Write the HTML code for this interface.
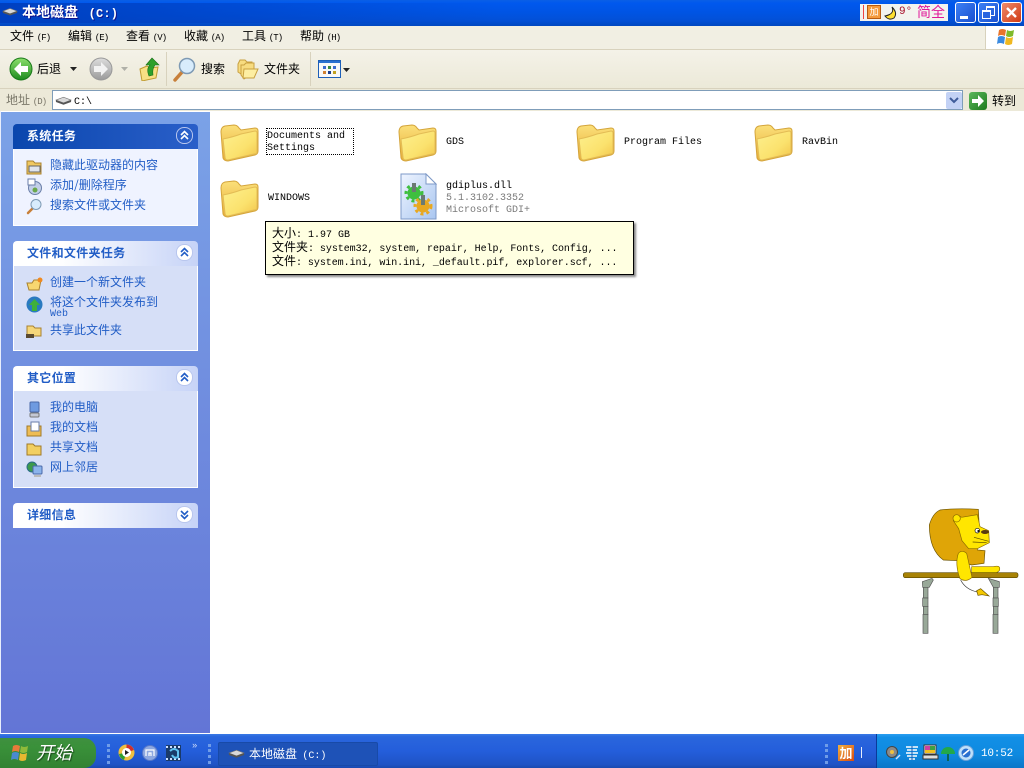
<!DOCTYPE html>
<html lang="zh"><head><meta charset="utf-8"><title>本地磁盘 (C:)</title>
<style>
html,body{margin:0;padding:0;width:1024px;height:768px;overflow:hidden;background:#fff}
body{position:relative;font:12px/14px "WenQuanYi Zen Hei","Noto Sans CJK SC",sans-serif;color:#000}
.a,.t,svg.i{position:absolute}
.t{white-space:pre;line-height:14px}
.m{font-family:"Liberation Mono",monospace;font-size:10px}
.k{font-family:"Liberation Mono",monospace;font-size:9px;letter-spacing:-.9px}
.hd{position:absolute;left:13px;width:185px;height:25px;border-radius:4px 4px 0 0;background:linear-gradient(90deg,#fff 0,#fff 25%,#c6d3f7 100%)}
.hd b{position:absolute;left:14px;top:5px;font-size:12px;line-height:14px;color:#215dc6;letter-spacing:.3px}
.bd{position:absolute;left:13px;width:183px;border:1px solid #fff;border-top:0;background:#d6dff7}
.lk{position:absolute;left:50px;color:#215dc6;white-space:pre;line-height:14px}
.cb{position:absolute;left:176px;width:15px;height:15px;border-radius:8px;background:#fff;border:1px solid #b8c6ee;color:#215dc6}
</style></head><body>
<svg width="0" height="0" style="position:absolute"><defs>
<linearGradient id="fg" x1="0" y1="0" x2="1" y2="1"><stop offset="0" stop-color="#fdf08e"/><stop offset=".6" stop-color="#fbe26e"/><stop offset="1" stop-color="#f2c44a"/></linearGradient>
<linearGradient id="fb" x1="0" y1="0" x2="0" y2="1"><stop offset="0" stop-color="#fbe07a"/><stop offset="1" stop-color="#e8ac36"/></linearGradient>
<linearGradient id="pg" x1="0" y1="0" x2="1" y2="1"><stop offset="0" stop-color="#eef4ff"/><stop offset="1" stop-color="#a9c6f0"/></linearGradient>
<linearGradient id="gb" x1="0" y1="0" x2="0" y2="1"><stop offset="0" stop-color="#8ce06c"/><stop offset="1" stop-color="#1d8a1e"/></linearGradient>
<linearGradient id="gr" x1="0" y1="0" x2="0" y2="1"><stop offset="0" stop-color="#dcdcdc"/><stop offset="1" stop-color="#9a9a9a"/></linearGradient>
<symbol id="folder" viewBox="0 0 40 38"><path d="M2 8Q2 3 6 2L15 1Q18 1 20 4L22 6L36 4Q39 4 39 7V27Q39 30 36 31L9 37Q5 37 4 34Z" fill="url(#fb)" stroke="#d4a53c"/><path d="M4 15Q14 13 22 10L36 7Q38 7 38 9V28Q38 30 35 30L9 36Q6 36 6 33Z" fill="url(#fg)" stroke="#e3bc55"/></symbol>
<symbol id="hdd" viewBox="0 0 18 10"><path d="M1 4L9 1L17 4L9 7Z" fill="#d9d9d9" stroke="#777" stroke-width=".6"/><path d="M1 4V6L9 9L17 6V4L9 7Z" fill="#555"/></symbol>
</defs></svg>

<!-- title bar -->
<div class="a" style="left:0;top:0;width:1024px;height:26px;background:linear-gradient(180deg,#0a5fe6 0,#0058ee 12%,#0054e3 50%,#0350d6 80%,#0248c0 100%)"></div>
<div class="a" style="left:0;top:3px;width:500px;height:20px;background:linear-gradient(90deg,#0040c0,rgba(0,64,192,0))"></div>
<svg class="i" style="left:2px;top:7px" width="16" height="10"><use href="#hdd"/></svg>
<div class="t" style="left:22px;top:5px;color:#fff;font-weight:bold;font-size:14px;text-shadow:1px 1px 0 #0f1089">本地磁盘 <span class="m" style="font-size:12px;font-weight:bold;letter-spacing:.2px"> (C:)</span></div>
<div class="a" style="left:860px;top:4px;width:88px;height:17px;background:#f3f3ee"></div>
<div class="a" style="left:863px;top:5px;width:1px;height:14px;background:#e44"></div>
<div class="a" style="left:867px;top:5px;width:14px;height:14px;background:#f49a3c;border:1px solid #b85a10;box-sizing:border-box;color:#fff;font-size:9px;line-height:12px;text-align:center">加</div>
<svg class="i" style="left:883px;top:6px" width="15" height="14"><path d="M9 1Q12 8 2 10Q6 15 11 12Q15 7 9 1Z" fill="#ffe030" stroke="#222" stroke-width="1"/></svg>
<div class="t" style="left:899px;top:5px;color:#a8102c;font-size:11px;font-family:'Liberation Mono',monospace">9°</div>
<div class="t" style="left:917px;top:4px;color:#e0189a;font-size:14px;line-height:17px">简全</div>
<div class="a" style="left:955px;top:2px;width:21px;height:21px;box-sizing:border-box;border:1px solid #fff;border-radius:3px;background:linear-gradient(135deg,#3c80f4,#1a50d0)"><div class="a" style="left:4px;top:13px;width:8px;height:3px;background:#fff"></div></div>
<div class="a" style="left:978px;top:2px;width:21px;height:21px;box-sizing:border-box;border:1px solid #fff;border-radius:3px;background:linear-gradient(135deg,#3c80f4,#1a50d0)"><div class="a" style="left:7px;top:3px;width:7px;height:7px;border:1px solid #fff;border-top-width:2px"></div><div class="a" style="left:3px;top:7px;width:7px;height:6px;border:1px solid #fff;border-top-width:2px;background:#2a66e0"></div></div>
<div class="a" style="left:1001px;top:2px;width:21px;height:21px;box-sizing:border-box;border:1px solid #fff;border-radius:3px;background:linear-gradient(135deg,#ee8a6a,#d03a14)"><svg class="i" style="left:3px;top:3px" width="13" height="13"><path d="M2 2L11 11M11 2L2 11" stroke="#fff" stroke-width="2.4"/></svg></div>

<!-- menu bar -->
<div class="a" style="left:0;top:26px;width:1024px;height:23px;background:#f1efe3;border-bottom:1px solid #d8d2bd"></div>
<div class="t" style="left:10px;top:29px">文件 <span class="k">(F)</span></div>
<div class="t" style="left:68px;top:29px">编辑 <span class="k">(E)</span></div>
<div class="t" style="left:126px;top:29px">查看 <span class="k">(V)</span></div>
<div class="t" style="left:184px;top:29px">收藏 <span class="k">(A)</span></div>
<div class="t" style="left:242px;top:29px">工具 <span class="k">(T)</span></div>
<div class="t" style="left:300px;top:29px">帮助 <span class="k">(H)</span></div>
<div class="a" style="left:985px;top:26px;width:39px;height:23px;background:#fff;border-left:1px solid #d8d2bd"></div>
<svg class="i" style="left:996px;top:27px" width="20" height="20"><path d="M3 3Q6 1 10 3L9 9Q5 7 2 9Z" fill="#e8742a"/><path d="M11 3Q14 5 18 3L17 9Q13 11 10 9Z" fill="#7fba2a"/><path d="M2 10Q5 8 9 10L8 17Q4 15 1 17Z" fill="#3a8ae0"/><path d="M10 10Q13 12 17 10L16 17Q12 19 9 17Z" fill="#f0b820"/></svg>

<!-- toolbar -->
<div class="a" style="left:0;top:50px;width:1024px;height:38px;background:linear-gradient(180deg,#f4f2e8,#ece9d8);border-bottom:1px solid #d8d2bd"></div>
<svg class="i" style="left:9px;top:57px" width="24" height="24"><circle cx="12" cy="12" r="11" fill="url(#gb)" stroke="#1a7a1a"/><path d="M12 5L5 12L12 19V15H19V9H12Z" fill="#fff"/></svg>
<div class="t" style="left:37px;top:62px">后退</div>
<svg class="i" style="left:70px;top:67px" width="7" height="5"><path d="M0 0H7L3.500 4Z" fill="#222"/></svg>
<svg class="i" style="left:89px;top:57px" width="24" height="24"><circle cx="12" cy="12" r="11" fill="url(#gr)" stroke="#999"/><path d="M12 5L19 12L12 19V15H5V9H12Z" fill="#f2f2f2"/></svg>
<svg class="i" style="left:121px;top:67px" width="7" height="4"><path d="M0 0H7L3.500 4Z" fill="#b0b0a8"/></svg>
<svg class="i" style="left:139px;top:57px" width="21" height="24"><path d="M1 12L8 9L11 11L19 10L17 21L3 24Z" fill="#f8e084" stroke="#c09c34"/><path d="M10 19Q7 12 11 8H7L13 1L20 8H16Q13 12 14 18Z" fill="#2da02a" stroke="#1a6e1a" stroke-width=".6"/></svg>
<div class="a" style="left:166px;top:52px;width:1px;height:34px;background:#d8d2bd"></div>
<svg class="i" style="left:172px;top:57px" width="25" height="25"><path d="M3 23L11 14" stroke="#c8803a" stroke-width="3.500" stroke-linecap="round"/><circle cx="15" cy="9" r="7.500" fill="#d8ecfc" stroke="#7e9ab4" stroke-width="1.500"/></svg>
<div class="t" style="left:201px;top:62px">搜索</div>
<svg class="i" style="left:237px;top:59px" width="22" height="21"><path d="M1 5L3 1H8L10 3H15V8H6L4 15L1 13Z" fill="#f7dc80" stroke="#c8a040"/><path d="M4 6H7L9 4H17V14L7 20L4 16Z" fill="#f7dc80" stroke="#c8a040"/><path d="M7 10H21L17 19H6Z" fill="#fdeea2" stroke="#c8a040"/></svg>
<div class="t" style="left:264px;top:62px">文件夹</div>
<div class="a" style="left:310px;top:52px;width:1px;height:34px;background:#d8d2bd"></div>
<svg class="i" style="left:318px;top:60px" width="24" height="19"><rect x=".5" y=".5" width="22" height="17" fill="#f8f8f8" stroke="#1d5fb8"/><rect x="1" y="1" width="21" height="2" fill="#2a70d0"/><g><rect x="5" y="6" width="3" height="3" fill="#3a6ad0"/><rect x="10" y="6" width="3" height="3" fill="#3a8a3a"/><rect x="15" y="6" width="3" height="3" fill="#3a6ad0"/><rect x="5" y="11" width="3" height="3" fill="#d08030"/><rect x="10" y="11" width="3" height="3" fill="#1d3f90"/><rect x="15" y="11" width="3" height="3" fill="#c0a020"/></g></svg>
<svg class="i" style="left:343px;top:68px" width="7" height="4"><path d="M0 0H7L3.500 4Z" fill="#222"/></svg>

<!-- address bar -->
<div class="a" style="left:0;top:89px;width:1024px;height:22px;background:#ece9d8"></div>
<div class="t" style="left:6px;top:93px;color:#7b786a">地址 <span class="k">(D)</span></div>
<div class="a" style="left:52px;top:90px;width:911px;height:20px;box-sizing:border-box;background:#fff;border:1px solid #7f9db9"></div>
<svg class="i" style="left:55px;top:96px" width="17" height="10"><use href="#hdd"/></svg>
<div class="t m" style="left:74px;top:96px">C:\</div>
<div class="a" style="left:946px;top:92px;width:16px;height:17px;border-radius:2px;background:#c3d2f5"><svg class="i" style="left:3px;top:5px" width="10" height="7"><path d="M1 1L5 5L9 1" fill="none" stroke="#3f5c9a" stroke-width="2"/></svg></div>
<div class="a" style="left:969px;top:92px;width:18px;height:18px;border-radius:3px;background:linear-gradient(135deg,#5cb85c,#1d7a1d)"><svg class="i" style="left:2px;top:2px" width="14" height="14"><path d="M7 1L13 7L7 13V9H1V5H7Z" fill="#fff"/></svg></div>
<div class="t" style="left:992px;top:94px">转到</div>

<!-- sidebar -->
<div class="a" style="left:0;top:111px;width:1px;height:624px;background:#e8eefc"></div>
<div class="a" style="left:1px;top:112px;width:209px;height:621px;background:linear-gradient(180deg,#7ba2e7,#6375d6)"></div>

<div class="hd" style="top:124px;background:linear-gradient(90deg,#0a46ad,#2a5fc9)"><b style="color:#fff">系统任务</b></div>
<div class="cb" style="top:127px;background:#2a5fc9;border-color:#b8c6ee"><svg class="i" style="left:3px;top:2px" width="9" height="11"><path d="M1 5L4.500 1.500L8 5M1 9L4.500 5.500L8 9" fill="none" stroke="#fff" stroke-width="1.600"/></svg></div>
<div class="bd" style="top:149px;height:76px;background:#eff3ff"></div>
<svg class="i" style="left:26px;top:159px" width="17" height="16"><path d="M1 2H7L9 4H15V15H1Z" fill="#f0c860" stroke="#a88230"/><rect x="3" y="7" width="11" height="6" fill="#dfe4ec" stroke="#666"/></svg>
<div class="lk" style="top:158px">隐藏此驱动器的内容</div>
<svg class="i" style="left:26px;top:178px" width="17" height="17"><circle cx="9" cy="10" r="6.500" fill="#c2cfe8" stroke="#6a7ea8"/><rect x="2" y="1" width="7" height="6" fill="#fff" stroke="#6a7ea8"/><circle cx="9" cy="12" r="2.500" fill="#6aa84a"/></svg>
<div class="lk" style="top:178px">添加/删除程序</div>
<svg class="i" style="left:26px;top:198px" width="17" height="17"><path d="M2 15L7 10" stroke="#c8803a" stroke-width="2.500" stroke-linecap="round"/><circle cx="10" cy="6.500" r="5" fill="#d8ecfc" stroke="#7e9ab4"/></svg>
<div class="lk" style="top:198px">搜索文件或文件夹</div>

<div class="hd" style="top:241px"><b>文件和文件夹任务</b></div>
<div class="cb" style="top:244px"><svg class="i" style="left:3px;top:2px" width="9" height="11"><path d="M1 5L4.500 1.500L8 5M1 9L4.500 5.500L8 9" fill="none" stroke="#215dc6" stroke-width="1.600"/></svg></div>
<div class="bd" style="top:266px;height:84px"></div>
<svg class="i" style="left:26px;top:276px" width="17" height="16"><path d="M1 7H6L8 4H15L13 14H3Z" fill="#f8d770" stroke="#a88230"/><circle cx="14" cy="4" r="2.500" fill="#f08a20"/></svg>
<div class="lk" style="top:275px">创建一个新文件夹</div>
<svg class="i" style="left:26px;top:296px" width="17" height="17"><circle cx="8.500" cy="8.500" r="8" fill="#2a7ac0"/><path d="M8.500 3L14 9H11V15H6V9H3Z" fill="#3fb03a"/></svg>
<div class="lk" style="top:295px">将这个文件夹发布到</div>
<div class="lk m" style="top:308px">Web</div>
<svg class="i" style="left:26px;top:323px" width="17" height="16"><path d="M1 3H7L9 5H15V13H1Z" fill="#f6d77a" stroke="#a88230"/><rect x="0" y="11" width="8" height="4" fill="#5a4a30"/></svg>
<div class="lk" style="top:323px">共享此文件夹</div>

<div class="hd" style="top:366px"><b>其它位置</b></div>
<div class="cb" style="top:369px"><svg class="i" style="left:3px;top:2px" width="9" height="11"><path d="M1 5L4.500 1.500L8 5M1 9L4.500 5.500L8 9" fill="none" stroke="#215dc6" stroke-width="1.600"/></svg></div>
<div class="bd" style="top:391px;height:96px"></div>
<svg class="i" style="left:26px;top:401px" width="17" height="17"><rect x="4" y="1" width="9" height="10" rx="1" fill="#6e9ae0" stroke="#4a68a8"/><rect x="4" y="12" width="9" height="4" rx="1" fill="#c4c8d4" stroke="#777"/></svg>
<div class="lk" style="top:400px">我的电脑</div>
<svg class="i" style="left:26px;top:421px" width="17" height="16"><path d="M1 5H15V15H1Z" fill="#eebc55" stroke="#a07a28"/><rect x="5" y="1" width="8" height="9" fill="#fff" stroke="#6a7ea8"/></svg>
<div class="lk" style="top:420px">我的文档</div>
<svg class="i" style="left:26px;top:441px" width="17" height="16"><path d="M1 3H7L9 5H15V14H1Z" fill="#f2cf62" stroke="#a07a28"/></svg>
<div class="lk" style="top:440px">共享文档</div>
<svg class="i" style="left:26px;top:461px" width="17" height="17"><circle cx="6" cy="6" r="5" fill="#3d9a4c" stroke="#2a6a8a"/><rect x="7" y="5" width="9" height="8" rx="1" fill="#8cb4ec" stroke="#4a68a8"/><rect x="8" y="14" width="7" height="2" fill="#bbb"/></svg>
<div class="lk" style="top:460px">网上邻居</div>

<div class="hd" style="top:503px"><b>详细信息</b></div>
<div class="cb" style="top:506px"><svg class="i" style="left:3px;top:2px" width="9" height="11"><path d="M1 2L4.500 5.500L8 2M1 6L4.500 9.500L8 6" fill="none" stroke="#215dc6" stroke-width="1.600"/></svg></div>

<!-- content items -->
<svg class="i" style="left:219px;top:124px" width="40" height="38"><use href="#folder"/></svg>
<div class="a" style="left:266px;top:128px;width:86px;height:25px;border:1px dotted #000"></div>
<div class="t m" style="left:267px;top:131px;line-height:12px">Documents and
Settings</div>
<svg class="i" style="left:397px;top:124px" width="40" height="38"><use href="#folder"/></svg>
<div class="t m" style="left:446px;top:136px">GDS</div>
<svg class="i" style="left:575px;top:124px" width="40" height="38"><use href="#folder"/></svg>
<div class="t m" style="left:624px;top:136px">Program Files</div>
<svg class="i" style="left:753px;top:124px" width="40" height="38"><use href="#folder"/></svg>
<div class="t m" style="left:802px;top:136px">RavBin</div>
<svg class="i" style="left:219px;top:180px" width="40" height="38"><use href="#folder"/></svg>
<div class="t m" style="left:268px;top:192px">WINDOWS</div>
<svg class="i" style="left:399px;top:173px" width="38" height="48"><path d="M2 1H27L37 11V46H2Z" fill="url(#pg)" stroke="#7e9ac8"/><path d="M27 1V11H37Z" fill="#fff" stroke="#7e9ac8"/><circle cx="15" cy="20" r="6.500" fill="#3fbf3f"/><circle cx="15" cy="20" r="8" fill="none" stroke="#3fbf3f" stroke-width="3" stroke-dasharray="3 3"/><circle cx="24" cy="33" r="6.500" fill="#e8a820"/><circle cx="24" cy="33" r="8" fill="none" stroke="#e8a820" stroke-width="3" stroke-dasharray="3 3"/><rect x="13" y="10" width="4" height="9" fill="#6a7a72"/><rect x="22" y="22" width="4" height="10" fill="#6a7a72"/></svg>
<div class="t m" style="left:446px;top:180px">gdiplus.dll</div>
<div class="t m" style="left:446px;top:192px;color:#7a7a7a">5.1.3102.3352</div>
<div class="t m" style="left:446px;top:204px;color:#7a7a7a">Microsoft GDI+</div>

<!-- tooltip -->
<div class="a" style="left:265px;top:221px;width:367px;height:52px;background:#ffffe1;border:1px solid #000;box-shadow:2px 2px 2px #888"></div>
<div class="t" style="left:272px;top:226px">大小<span class="m">: 1.97 GB</span></div>
<div class="t" style="left:272px;top:240px">文件夹<span class="m" style="letter-spacing:-.05px">: system32, system, repair, Help, Fonts, Config, ...</span></div>
<div class="t" style="left:272px;top:254px">文件<span class="m" style="letter-spacing:-.05px">: system.ini, win.ini, _default.pif, explorer.scf, ...</span></div>

<!-- lion -->
<svg class="i" style="left:890px;top:500px" width="134" height="140" viewBox="0 0 402 420">
<path d="M118 75Q128 40 150 30Q200 24 265 28L268 85L262 150L285 152L282 190L245 195L205 182L160 180Q118 150 118 75Z" fill="#dfa507" stroke="#6a5200" stroke-width="2"/>
<path d="M190 62Q192 44 208 48L215 52L262 44L270 80L296 92L298 128L262 146L236 146L216 122L206 86Z" fill="#ffe600" stroke="#8a6a00" stroke-width="2"/>
<circle cx="200" cy="55" r="11" fill="#ffe600" stroke="#8a6a00" stroke-width="2"/>
<circle cx="262" cy="92" r="7" fill="#fff" stroke="#000" stroke-width="2"/><circle cx="265" cy="93" r="3" fill="#000"/>
<ellipse cx="285" cy="96" rx="12" ry="6" fill="#5a3a10"/>
<path d="M252 112L296 124M248 126L290 128" stroke="#5a4a00" stroke-width="2" fill="none"/>
<path d="M245 200L310 200Q334 194 328 212L315 222L245 220Z" fill="#ffe600" stroke="#8a6a00" stroke-width="2"/>
<rect x="40" y="218" width="344" height="15" rx="6" fill="#a88306" stroke="#5a4800" stroke-width="2"/>
<path d="M205 160Q216 148 230 160L246 232Q228 248 210 236Q194 192 205 160Z" fill="#ffe600" stroke="#8a6a00" stroke-width="2"/>
<path d="M212 240Q226 268 262 276" fill="none" stroke="#333" stroke-width="2"/>
<path d="M260 272L272 266L297 288L276 284L264 286Z" fill="#f4c800" stroke="#6a5200" stroke-width="2"/>
<g fill="#98a898" stroke="#555" stroke-width="2">
<path d="M97 245L126 235L130 240L118 262H98Z"/><rect x="100" y="262" width="14" height="32"/><rect x="98" y="294" width="16" height="25"/><rect x="100" y="319" width="14" height="24"/><rect x="99" y="343" width="15" height="57"/>
<path d="M295 235L328 245V262H310Z"/><rect x="310" y="262" width="14" height="32"/><rect x="309" y="294" width="16" height="25"/><rect x="310" y="319" width="14" height="24"/><rect x="309" y="343" width="15" height="57"/></g>
</svg>

<!-- taskbar -->
<div class="a" style="left:0;top:734px;width:1024px;height:34px;background:linear-gradient(180deg,#3a7ae6 0,#2a66dc 8%,#245edb 50%,#1f53c5 90%,#1a49ae 100%)"></div>
<div class="a" style="left:0;top:738px;width:96px;height:30px;border-radius:0 12px 12px 0;background:linear-gradient(180deg,#3f8f3f,#3a913a 30%,#328232)"></div>
<svg class="i" style="left:10px;top:743px" width="20" height="20"><path d="M3 3Q6 1 10 3L9 9Q5 7 2 9Z" fill="#e87a3a"/><path d="M11 3Q14 5 18 3L17 9Q13 11 10 9Z" fill="#8fba3a"/><path d="M2 10Q5 8 9 10L8 17Q4 15 1 17Z" fill="#4a8ad0"/><path d="M10 10Q13 12 17 10L16 17Q12 19 9 17Z" fill="#e8b830"/></svg>
<div class="t" style="left:36px;top:741px;color:#fff;font-size:18px;line-height:22px;font-style:italic;text-shadow:1px 1px 1px #1a4a1a">开始</div>
<div class="a" style="left:107px;top:744px;height:20px;border-left:3px dotted #6f9ce8"></div>
<svg class="i" style="left:118px;top:744px" width="17" height="17"><circle cx="8.500" cy="8.500" r="8" fill="#f0c040"/><path d="M8.500 .5A8 8 0 0 1 16 6L8.500 8.500Z" fill="#d03030"/><path d="M1 10L8.500 8.500L6 16A8 8 0 0 1 1 10Z" fill="#30a030"/><circle cx="8.500" cy="8.500" r="4.500" fill="#fff"/><path d="M7 6L11 8.500L7 11Z" fill="#222"/></svg>
<svg class="i" style="left:142px;top:745px" width="16" height="16"><circle cx="8" cy="8" r="7.500" fill="#8ea8e0" stroke="#5878c8"/><path d="M4 11V5H12V11M7 11V8H9V11" fill="none" stroke="#fff" stroke-width="1.200"/></svg>
<svg class="i" style="left:166px;top:745px" width="15" height="16"><rect width="15" height="16" fill="#1a3a6a"/><path d="M0 2H15M0 14H15" stroke="#cfe0ff" stroke-dasharray="2 2" stroke-width="2"/><path d="M4 6Q8 2 12 6V12Q8 14 6 10" fill="none" stroke="#5fc0f0" stroke-width="2"/></svg>
<div class="t m" style="left:192px;top:739px;color:#cfdcf8;font-size:9px">»</div>
<div class="a" style="left:208px;top:744px;height:20px;border-left:3px dotted #6f9ce8"></div>
<div class="a" style="left:218px;top:742px;width:160px;height:24px;box-sizing:border-box;background:#1e52b7;border:1px solid #184aa8;border-radius:2px"></div>
<svg class="i" style="left:228px;top:749px" width="17" height="10"><use href="#hdd"/></svg>
<div class="t" style="left:249px;top:747px;color:#fff">本地磁盘  <span class="m">(C:)</span></div>
<div class="a" style="left:825px;top:744px;height:20px;border-left:3px dotted #6f9ce8"></div>
<div class="a" style="left:838px;top:745px;width:16px;height:16px;background:linear-gradient(135deg,#f0b040,#d84a10);color:#fff;font-size:13px;line-height:16px;text-align:center;font-weight:bold">加</div>
<div class="a" style="left:861px;top:747px;width:1px;height:11px;background:#e8eefc"></div>
<div class="a" style="left:876px;top:734px;width:148px;height:34px;background:linear-gradient(180deg,#2a9ef0 0,#128fe6 10%,#0f8ae0 60%,#0b76c8 100%);border-left:1px solid #0a3a9a;box-sizing:border-box"></div>
<svg class="i" style="left:886px;top:745px" width="16" height="17"><circle cx="6" cy="7" r="5.500" fill="#8a8a8a" stroke="#444"/><circle cx="6" cy="7" r="2" fill="#f0c040"/><path d="M10 14L14 10" stroke="#cfe0ff" stroke-width="1.500"/></svg>
<svg class="i" style="left:905px;top:745px" width="14" height="16"><path d="M1 2H13M2 5H12M1 8H13M2 11H12M4 14H10" stroke="#fff" stroke-width="1.500"/><path d="M7 1V15" stroke="#1a5ab0"/></svg>
<svg class="i" style="left:922px;top:744px" width="17" height="17"><rect x="2" y="1" width="12" height="9" fill="#fff" stroke="#333"/><path d="M3 2H8V6H3Z" fill="#d040a0"/><path d="M8 2H13V6H8Z" fill="#40a040"/><path d="M3 6H13V9H3Z" fill="#f0c020"/><rect x="1" y="11" width="15" height="4" fill="#ddd" stroke="#333"/></svg>
<svg class="i" style="left:940px;top:746px" width="16" height="16"><path d="M1 8A7 7 0 0 1 15 8Z" fill="#22a84a"/><path d="M8 8V15" stroke="#0b5a2a" stroke-width="1.500"/></svg>
<svg class="i" style="left:958px;top:745px" width="16" height="16"><circle cx="8" cy="8" r="7.500" fill="#bfe0fa" stroke="#6aa0d8"/><circle cx="8" cy="8" r="4.500" fill="#2a70d0"/><path d="M5 10L11 5" stroke="#fff" stroke-width="1.500"/></svg>
<div class="t" style="left:981px;top:747px;color:#fff;font-family:'Liberation Mono',monospace;font-size:11px;letter-spacing:-.2px">10:52</div>
</body></html>
